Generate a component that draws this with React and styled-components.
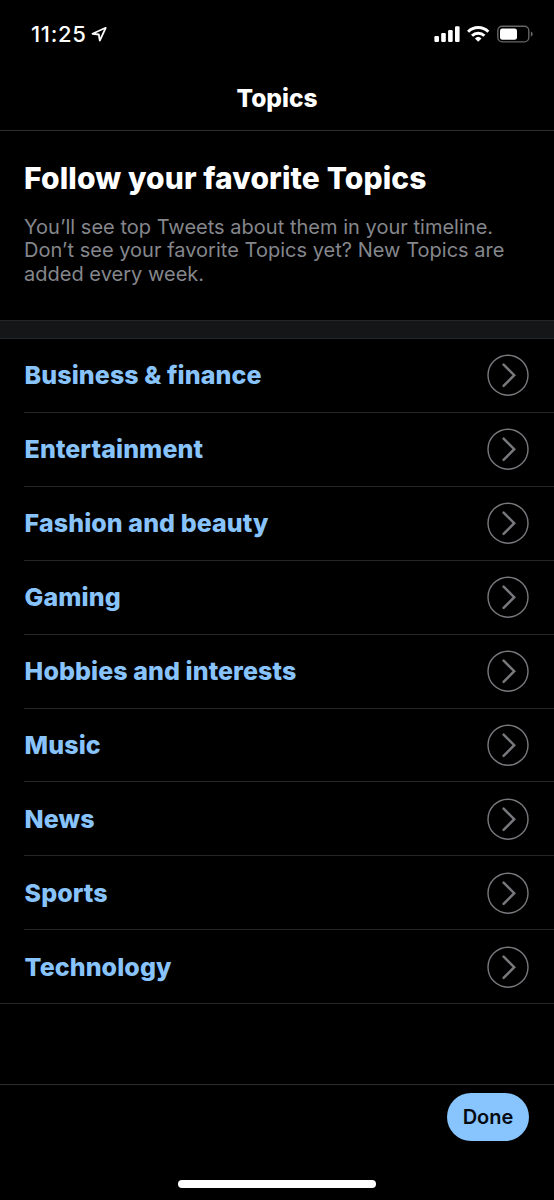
import styled, { createGlobalStyle } from "styled-components";

const topics = [
  "Business & finance",
  "Entertainment",
  "Fashion and beauty",
  "Gaming",
  "Hobbies and interests",
  "Music",
  "News",
  "Sports",
  "Technology",
];

const App = () => {
  return (
    <Screen>
      <GlobalStyle />
      <StatusBar>
        <Clock>
          <Time>11:25</Time>
          <LocationIcon />
        </Clock>
        <StatusIcons />
      </StatusBar>
      <Header>
        <Title>Topics</Title>
      </Header>
      <Intro>
        <Heading>Follow your favorite Topics</Heading>
        <Description>
          You’ll see top Tweets about them in your timeline.
          <br />
          Don’t see your favorite Topics yet? New Topics are
          <br />
          added every week.
        </Description>
      </Intro>
      <Divider />
      <TopicList>
        {topics.map((topic) => (
          <TopicRow key={topic}>
            <TopicName>{topic}</TopicName>
            <ChevronIcon />
          </TopicRow>
        ))}
      </TopicList>
      <Footer>
        <DoneBtn>Done</DoneBtn>
        <HomeIndicator />
      </Footer>
    </Screen>
  );
};

const LocationIcon = () => (
  <svg width="17" height="17" viewBox="0 0 17 17" fill="none">
    <path
      d="M14.7 1.8 L1.5 7.8 L7.8 8.5 L8.8 14.6 Z"
      stroke="#fff"
      strokeWidth="1.8"
      strokeLinejoin="round"
    />
  </svg>
);

const StatusIcons = () => (
  <svg width="100" height="20" viewBox="0 0 100 20" fill="none">
    <g fill="#fff">
      <rect x="0.4" y="12" width="4.6" height="6" rx="1.2" />
      <rect x="7.2" y="9" width="4.6" height="9" rx="1.2" />
      <rect x="14.1" y="6" width="4.6" height="12" rx="1.2" />
      <rect x="21" y="2.2" width="4.6" height="15.8" rx="1.2" />
    </g>
    <g stroke="#fff" strokeWidth="3">
      <path d="M34.1 7.7 A14.4 14.4 0 0 1 54.3 7.7" />
      <path d="M38 11.8 A8.8 8.8 0 0 1 50.4 11.8" />
    </g>
    <path d="M44.2 17.7 L40.9 14.4 A4.8 4.8 0 0 1 47.5 14.4 Z" fill="#fff" />
    <rect
      x="63.8"
      y="2.3"
      width="31"
      height="15.6"
      rx="4.4"
      stroke="#666"
      strokeWidth="1.4"
    />
    <rect x="66" y="4.4" width="17" height="11.4" rx="2.4" fill="#fff" />
    <path d="M96.8 7.5 Q98.8 8.3 98.8 10.1 Q98.8 11.9 96.8 12.7 Z" fill="#666" />
  </svg>
);

const ChevronIcon = () => (
  <svg width="42" height="42" viewBox="0 0 42 42" fill="none">
    <circle cx="21" cy="21.2" r="20" stroke="#78797d" strokeWidth="1.4" />
    <path
      d="M16.6 10.6 L27.2 21.2 L16.6 31.8"
      stroke="#78797d"
      strokeWidth="2.5"
      strokeLinecap="round"
    />
  </svg>
);

const GlobalStyle = createGlobalStyle`
  * {
    box-sizing: border-box;
  }
  body {
    margin: 0;
    background-color: #000;
  }
`;
const Screen = styled.div`
  display: flex;
  flex-direction: column;
  width: 554px;
  height: 1200px;
  overflow: hidden;
  background-color: #000;
  color: #fff;
  font-family: Inter, "Liberation Sans", sans-serif;
`;
const StatusBar = styled.div`
  display: flex;
  justify-content: space-between;
  align-items: center;
  height: 68px;
  padding: 0 20px 0 31px;
`;
const Clock = styled.div`
  display: flex;
  align-items: center;
  gap: 4px;
`;
const Time = styled.span`
  width: 56px;
  font-size: 22px;
  font-weight: 500;
  letter-spacing: 0.7px;
`;
const Header = styled.header`
  display: flex;
  justify-content: center;
  align-items: center;
  height: 63px;
  padding-bottom: 3px;
  border-bottom: 1px solid #2f3032;
`;
const Title = styled.h1`
  margin: 0;
  font-size: 24.5px;
  font-weight: 800;
`;
const Intro = styled.section`
  height: 189px;
  padding: 29px 24px 0;
`;
const Heading = styled.h2`
  margin: 0;
  font-size: 30px;
  font-weight: 800;
  line-height: 36px;
  letter-spacing: 0.12px;
  white-space: nowrap;
`;
const Description = styled.p`
  margin: 19.6px 0 0;
  font-size: 20px;
  line-height: 23.7px;
  letter-spacing: 0.02px;
  white-space: nowrap;
  color: #85878c;
`;
const Divider = styled.div`
  flex: none;
  height: 19px;
  border-top: 1px solid #252628;
  border-bottom: 1px solid #252628;
  background-color: #151618;
`;
const TopicList = styled.ul`
  margin: 0;
  padding: 0;
  list-style: none;
`;
const TopicRow = styled.li`
  display: flex;
  justify-content: space-between;
  align-items: center;
  height: 73.92px;
  margin-left: 24px;
  padding-right: 25px;
  border-bottom: 1px solid #252628;
  &:last-child {
    margin-left: 0;
    padding-left: 24px;
  }
`;
const TopicName = styled.span`
  padding: 1px 0 0 0.6px;
  font-size: 25px;
  font-weight: 800;
  line-height: 31px;
  letter-spacing: 0.08px;
  color: #88c4fb;
`;
const Footer = styled.footer`
  display: flex;
  flex-direction: column;
  justify-content: space-between;
  height: 116px;
  margin-top: auto;
  padding: 8px 25px 12px;
  border-top: 1px solid #2b2c2e;
`;
const DoneBtn = styled.button`
  align-self: flex-end;
  width: 82px;
  height: 48px;
  padding: 0;
  border: 0;
  border-radius: 24px;
  font-family: inherit;
  font-size: 20px;
  font-weight: 600;
  color: #050a12;
  background-color: #88c5fe;
  cursor: pointer;
`;
const HomeIndicator = styled.div`
  align-self: center;
  width: 198px;
  height: 8px;
  border-radius: 4px;
  background-color: #fff;
`;

export default App;
